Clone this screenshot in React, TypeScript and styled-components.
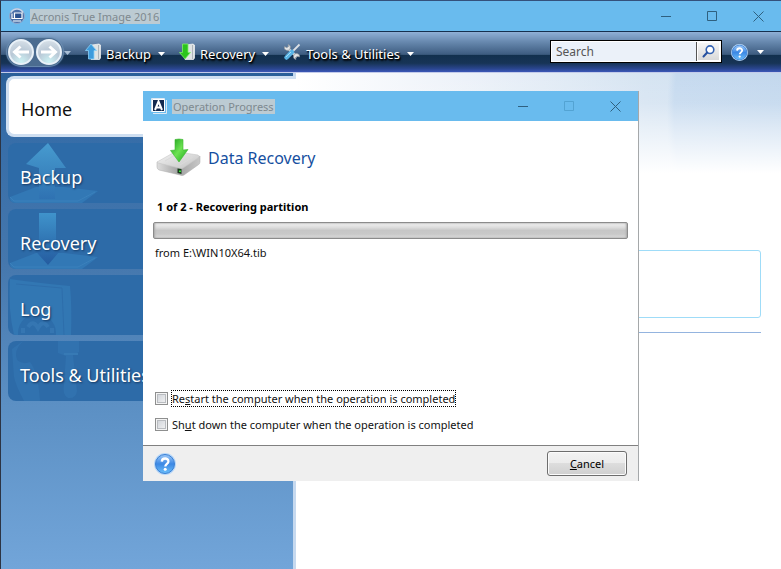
import React, { useState } from "react";
import styled, { createGlobalStyle, css } from "styled-components";

const Global = createGlobalStyle`
  *, *::before, *::after { box-sizing: border-box; }
  html, body { margin: 0; height: 100%; }
  #root { display: flex; flex-direction: column; height: 100%; }
  body, button, input { font-family: "Noto Sans", "Open Sans", sans-serif; font-size: 12px; }
  body { overflow: hidden; }
`;

const AppWindow = styled.div`
  flex: 1;
  display: flex;
  flex-direction: column;
  position: relative;
  min-height: 0;
  background: #fff;
  border-top: 1px solid #34517c;
  border-left: 1px solid #2c3444;
`;

const TitleBar = styled.header`
  display: flex;
  align-items: center;
  height: 30px;
  flex: none;
  padding-left: 8px;
  background: #69bbee;
`;

const TitleText = styled.h1`
  margin: 0 auto 0 5px;
  padding: 0 1px;
  height: 15px;
  line-height: 15px;
  font-size: 11px;
  font-weight: 400;
  white-space: nowrap;
  color: #7e898f;
  background: #bccbd3;
`;

const CaptionButton = styled.button`
  display: grid;
  place-items: center;
  width: 46px;
  height: 30px;
  padding: 0;
  border: 0;
  background: none;
  color: #2f607f;
  &:disabled { color: #53a3d3; }
`;

const Toolbar = styled.nav`
  display: flex;
  align-items: center;
  flex: none;
  height: 42px;
  padding: 0 17px 0 6px;
  border-top: 1px solid #16304f;
  border-bottom: 1px solid #c3cbea;
  background: linear-gradient(#8fb0d6 0, #6788ae 25%, #3d5c80 56%, #12304e 58%, #173456 78%, #2a4690 92%, #3c58b8 100%);
`;

const NavPair = styled.div`
  display: flex;
  align-items: center;
  gap: 2px;
  height: 28px;
  padding: 0 1px;
  border-radius: 14px;
  background: #4b6c90;
  box-shadow: 0 0 1px 1px #6d8fb3;
`;

const RoundButton = styled.button`
  display: grid;
  place-items: center;
  width: 26px;
  height: 26px;
  padding: 0;
  border: 2px solid #e9f1f8;
  border-radius: 50%;
  background: radial-gradient(circle at 50% 95%, #cdf3f5 0, #b9c8d6 50%, #dde5ec 100%);
`;

const PlainButton = styled.button`
  display: flex;
  align-items: center;
  padding: 0;
  border: 0;
  background: none;
  color: #fff;
`;

const HistoryButton = styled(PlainButton)`
  padding: 2px 0 0 1px;
  color: #a9bfd6;
`;

const HelpButton = styled(PlainButton)`
  gap: 9px;
`;

const MenuButton = styled(PlainButton)`
  gap: 5px;
  margin-left: 14px;
  font-size: 13px;
  line-height: 20px;
  white-space: nowrap;
  text-shadow: 1px 1px 1px #000, 1px 2px 2px #000;
`;

const MenuLabel = styled.span`
  display: flex;
  align-items: center;
  gap: 7px;
  padding-top: 4px;
`;

const SearchBox = styled.form`
  display: flex;
  width: 172px;
  height: 23px;
  margin-left: auto;
  margin-right: 9px;
  margin-bottom: 2px;
  border: 1px solid #000;
  background: #fff;
  padding: 1px;
`;

const SearchInput = styled.input`
  flex: 1;
  min-width: 0;
  padding: 0 4px;
  border: 0;
  border-right: 1px solid #555;
  outline: 0;
  background: #ebf1f9;
  color: #555;
  font-size: 12px;
  &::placeholder { color: #555; opacity: 1; }
`;

const SearchButton = styled.button`
  display: grid;
  place-items: center;
  width: 23px;
  padding: 0;
  border: 1px solid #fff;
  background: linear-gradient(#f6f6f6, #d9d9d9);
`;

const Body = styled.div`
  flex: 1;
  display: flex;
  min-height: 0;
`;

const Sidebar = styled.aside`
  display: flex;
  flex-direction: column;
  gap: 6px;
  width: 295px;
  flex: none;
  padding: 3px 0 0 7px;
  border-right: 3px solid #c6d9ef;
  background: linear-gradient(#2a5f99 0, #366da8 12%, #4577ad 38%, #5b8fc3 66%, #72a5d9 100%);
`;

const SideLink = styled.a<{ $active?: boolean }>`
  position: relative;
  display: flex;
  align-items: center;
  height: 60px;
  padding: 8px 0 0 12px;
  border-radius: 8px 0 0 8px;
  overflow: hidden;
  font-size: 18px;
  line-height: 24px;
  text-decoration: none;
  white-space: nowrap;
  color: #fff;
  background: #2d6ba8;
  text-shadow: 1px 1px 2px #14365f;
  ${(p) =>
    p.$active &&
    css`
      height: 61px;
      margin: 0 -3px 0 -2px;
      padding-top: 4px;
      border: 3px solid #cfdff1;
      border-right: 0;
      background: #fff;
      color: #111;
      text-shadow: none;
    `}
`;

const SideArt = styled.svg`
  position: absolute;
  left: 0;
  top: 0;
`;

const SideLabel = styled.span`
  position: relative;
`;

const Content = styled.main`
  flex: 1;
  min-width: 0;
  padding: 177px 20px 0 20px;
  background: linear-gradient(rgba(255, 255, 255, 0) 0, rgba(255, 255, 255, 0.1) 30px, rgba(255, 255, 255, 0.45) 55px, #fff 100px),
    radial-gradient(ellipse 240px 300px at 611px 40px, #bfd5ec 0, #c6daef 97%, rgba(198, 218, 239, 0) 100%),
    linear-gradient(90deg, #fff 0, #edf2f9 35%, #d6e4f2 72%, #cfe0f1 100%);
`;

const Panel = styled.section`
  height: 68px;
  border: 1px solid #9fdcf8;
  border-radius: 3px;
`;

const Rule = styled.hr`
  height: 1px;
  margin: 14px 0 0;
  border: 0;
  background: #94b4df;
`;

const Dialog = styled.section`
  position: absolute;
  left: 142px;
  top: 90px;
  width: 496px;
  display: flex;
  flex-direction: column;
  background: #fff;
  border-right: 1px solid #a5a8aa;
`;

const DialogBody = styled.div`
  display: flex;
  flex-direction: column;
  height: 324px;
  padding: 16px 10px 12px 10px;
`;

const Heading = styled.div`
  display: flex;
  align-items: center;
  gap: 6px;
  height: 42px;
  padding-left: 3px;
`;

const HeadingText = styled.h2`
  margin: 0;
  font-size: 16px;
  line-height: 24px;
  font-weight: 400;
  color: #164fa0;
`;

const Step = styled.p`
  margin: 19px 0 6px 4px;
  font-size: 11px;
  line-height: 18px;
  font-weight: 700;
  color: #000;
`;

const Progress = styled.div`
  height: 17px;
  flex: none;
  border: 1px solid #8b8b8b;
  border-radius: 2px;
  background: linear-gradient(#f2f2f2 0, #dcdcdc 30%, #c6c6c6 50%, #c9c9c9 75%, #dedede 100%);
  box-shadow: inset 1px 0 2px #aaa, inset -1px 0 2px #aaa;
`;

const Source = styled.p`
  margin: 5px 0 auto 2px;
  font-size: 11px;
  line-height: 18px;
  color: #111;
`;

const Options = styled.div`
  display: flex;
  flex-direction: column;
  align-items: flex-start;
  gap: 8px;
  padding-left: 2px;
`;

const Option = styled.label`
  display: flex;
  align-items: center;
  gap: 3px;
  height: 18px;
  font-size: 11px;
  color: #111;
  white-space: nowrap;
`;

const OptionText = styled.span<{ $focused?: boolean }>`
  line-height: 15px;
  border: 1px dotted ${(p) => (p.$focused ? "#000" : "transparent")};
`;

const Tick = styled.input`
  appearance: none;
  width: 13px;
  height: 13px;
  margin: 0;
  border: 1px solid #8e8f8f;
  background: linear-gradient(135deg, #cbcfd5, #f6f6f6);
  box-shadow: inset 0 0 0 1px #f4f4f4, inset 0 0 0 2px #b9bcc0;
  &:checked { background: #2d6ba8; }
`;

const Footer = styled.footer`
  display: flex;
  align-items: center;
  justify-content: space-between;
  height: 36px;
  padding: 0 11px;
  border-top: 1px solid #808080;
  background: #efefef;
`;

const PushButton = styled.button`
  width: 80px;
  height: 25px;
  padding: 0;
  border: 1px solid #6d6d6d;
  border-radius: 3px;
  font-size: 11px;
  color: #000;
  background: linear-gradient(#f3f3f3 0, #ebebeb 48%, #dddddd 50%, #cfcfcf 100%);
  box-shadow: inset 0 0 0 1px #fbfbfb;
`;

const Caret = () => (
  <svg width="7" height="4" viewBox="0 0 7 4" aria-hidden>
    <path d="M0 0h7L3.5 4z" fill="currentColor" />
  </svg>
);

const MinimizeIcon = () => (
  <svg width="10" height="10" viewBox="0 0 10 10" aria-hidden>
    <path d="M0 5.5h10" stroke="currentColor" />
  </svg>
);

const MaximizeIcon = () => (
  <svg width="10" height="10" viewBox="0 0 10 10" aria-hidden>
    <path d="M.5.5h9v9h-9z" stroke="currentColor" fill="none" />
  </svg>
);

const CloseIcon = () => (
  <svg width="11" height="11" viewBox="0 0 11 11" aria-hidden>
    <path d="M.5.5l10 10M10.5.5l-10 10" stroke="currentColor" />
  </svg>
);

const AppIcon = () => (
  <svg width="16" height="16" viewBox="0 0 16 16" aria-hidden>
    <circle cx="8" cy="8" r="7.5" fill="#4a6fa8" stroke="#8fa9cd" />
    <path d="M2 4.5A7 7 0 0 1 14 4.5" fill="none" stroke="#c7d6ea" strokeWidth="1.5" />
    <path d="M3 5.5v5h2M5.500 5h7.500v5.500h-7.500z" fill="#28508f" stroke="#fff" strokeWidth="1.2" />
    <path d="M4 13h8" stroke="#d6e3f2" strokeWidth="1.300" />
  </svg>
);

const ArrowIcon = ({ right }: { right?: boolean }) => (
  <svg width="18" height="14" viewBox="0 0 18 14" aria-hidden>
    <path
      d={right ? "M1 7h14M9.500 1.500L15.500 7l-6 5.500" : "M17 7H3M8.500 1.500L2.500 7l6 5.500"}
      fill="none"
      stroke="#fff"
      strokeWidth="3"
    />
  </svg>
);

const BackupIcon = () => (
  <svg width="16" height="18" viewBox="0 0 16 18" aria-hidden>
    <path d="M7 2l7-1 1.500 1v13l-1 1.500H6z" fill="#dfe3e4" stroke="#f6f7f7" strokeWidth=".7" />
    <path d="M13.500 2v14" stroke="#aeb5ba" />
    <path d="M6 1l5.500 6.500H9V16H3.500V7.500H.5z" fill="#3d9bdc" stroke="#8bd0f6" strokeWidth=".8" />
  </svg>
);

const RecoveryIcon = () => (
  <svg width="16" height="18" viewBox="0 0 16 18" aria-hidden>
    <path d="M7 2l7-1 1.500 1v13l-1 1.500H6z" fill="#dfe3e4" stroke="#f6f7f7" strokeWidth=".7" />
    <path d="M13.500 2v14" stroke="#aeb5ba" />
    <path d="M3.500 1H9v8.500h2.500L6 16 .5 9.500h3z" fill="#2cc41c" stroke="#7df068" strokeWidth=".8" />
  </svg>
);

const ToolsIcon = () => (
  <svg width="18" height="18" viewBox="0 0 18 18" aria-hidden>
    <path d="M4 4.500L14 14" stroke="#c9ced3" strokeWidth="2.500" />
    <path d="M1.500 3.500A3 3 0 1 0 5 1.500l.5 2-1.500 1.300z" fill="#e3e5e7" stroke="#8a9097" strokeWidth=".6" />
    <path d="M16.500 14A3 3 0 1 0 13 16.500l-.5-2 1.500-1.300z" fill="#e3e5e7" stroke="#8a9097" strokeWidth=".6" />
    <path d="M16.500 1.500L9 9" stroke="#dde1e5" strokeWidth="1.800" />
    <path d="M9 9l-5.500 5.500" stroke="#58b4e6" strokeWidth="4.500" strokeLinecap="round" />
    <path d="M8 9l-5 5" stroke="#a5dcf6" strokeWidth="1" />
  </svg>
);

const SearchIcon = () => (
  <svg width="13" height="13" viewBox="0 0 13 13" aria-hidden>
    <circle cx="8" cy="4.700" r="3.800" fill="#fff" stroke="#3463b3" strokeWidth="1.600" />
    <path d="M5.200 7.500L1.500 11.500" stroke="#27509f" strokeWidth="2" strokeLinecap="round" />
  </svg>
);

const HelpIcon = ({ size, id }: { size: number; id: string }) => (
  <svg width={size} height={size} viewBox="0 0 22 22" aria-hidden>
    <defs>
      <linearGradient id={id} x1="0" y1="0" x2="0" y2="1">
        <stop offset="0" stopColor="#9fcbfa" />
        <stop offset=".5" stopColor="#3c88e4" />
        <stop offset="1" stopColor="#6cc0fb" />
      </linearGradient>
    </defs>
    <circle cx="11" cy="11" r="11" fill="#b7d7f8" />
    <circle cx="11" cy="11" r="9.500" fill={`url(#${id})`} stroke="#3b80d4" strokeWidth="1" />
    <path d="M7.800 8.600c.1-4.200 6.700-4 6.600-.2 0 2.300-3.100 2.600-3.100 5" fill="none" stroke="#fff" strokeWidth="2.300" />
    <circle cx="11.200" cy="16.300" r="1.500" fill="#fff" />
  </svg>
);

const DialogIcon = () => (
  <svg width="16" height="16" viewBox="0 0 16 16" aria-hidden>
    <path d="M.5.500h13v13h-13zM15.500 2v13.500H2" fill="none" stroke="#dbe7f2" />
    <path d="M1.500 1.500h12v12h-12z" fill="#13294f" stroke="#fff" />
    <path d="M4 12L7.500 3.500l3.500 8.500M5.300 9.500h4.400" fill="none" stroke="#fff" strokeWidth="2" />
  </svg>
);

const DriveIcon = () => (
  <svg width="46" height="40" viewBox="0 0 46 40" aria-hidden>
    <defs>
      <linearGradient id="driveTop" x1="0" y1="0" x2="1" y2="1">
        <stop offset="0" stopColor="#f4f4f4" />
        <stop offset="1" stopColor="#c3c3c3" />
      </linearGradient>
      <linearGradient id="driveSide" x1="0" y1="0" x2="1" y2="0">
        <stop offset="0" stopColor="#dedede" />
        <stop offset=".5" stopColor="#a2a2a2" />
        <stop offset="1" stopColor="#c8c8c8" />
      </linearGradient>
      <linearGradient id="driveArrow" x1="0" y1="0" x2="1" y2="1">
        <stop offset="0" stopColor="#159a1a" />
        <stop offset=".5" stopColor="#6de352" />
        <stop offset="1" stopColor="#17a51a" />
      </linearGradient>
    </defs>
    <path d="M1 24l24 6 19-12v6q0 2-2 3L28 37q-2 1-4 0L3 32q-2-1-2-3z" fill="url(#driveSide)" stroke="#aaa" strokeWidth=".5" />
    <path d="M1 24L17 15q2-1 5-1l20 3q2 1 0 3L27 30q-2 1-4 0L2 25z" fill="url(#driveTop)" stroke="#c8c8c8" strokeWidth=".6" />
    <path d="M9 23l12-7M24 27l13-8" stroke="#dadada" fill="none" />
    <path d="M21.500 30.500l4 .5v5l-4-1z" fill="#173a1a" />
    <path d="M23 32.500h2v1.500h-2z" fill="#37e63b" />
    <path d="M19 1.500q4-1 8 0V12l5-.5-9 12.500-8.500-11.500L19 12z" fill="url(#driveArrow)" stroke="#39b62e" strokeWidth=".6" />
  </svg>
);

type Art = "up" | "down" | "log" | "tools";

const Artwork = ({ kind }: { kind: Art }) => (
  <SideArt width="100" height="60" viewBox="0 0 100 60" aria-hidden>
    <defs>
      <linearGradient id={`art-${kind}`} x1="0" y1="0" x2="0" y2="1">
        <stop offset="0" stopColor={kind === "down" ? "#3f93cb" : "#479bcf"} />
        <stop offset="1" stopColor={kind === "down" ? "#245b9f" : "#2f72b2"} />
      </linearGradient>
    </defs>
    {(kind === "up" || kind === "down") && (
      <>
        <path d="M2 54L28 44h28l34 4-16 12H6q-4 0-4-6z" fill="#3278b5" />
        <path d="M2 54l4 4h64l17-9" fill="none" stroke="#3b81bc" />
      </>
    )}
    {kind === "up" && <path d="M40 0L58 25H47v31H31V25L18 21z" fill="url(#art-up)" />}
    {kind === "down" && <path d="M31 4h17v32h9L40 56 22 36h9z" fill="url(#art-down)" />}
    {kind === "log" && (
      <>
        <path d="M2 4q28 4 60 7 2 20 1 49H6q-6-25-4-56z" fill="#3277b3" />
        <path d="M8 9l46 4 2 47" fill="none" stroke="#2e6eab" />
        <circle cx="29" cy="58" r="19" fill="#2d6daa" />
        <path d="M15 58v-5M44 58v-5M20 52q5-8 10 1 5-9 10-1" fill="none" stroke="#3576b2" strokeWidth="4" />
      </>
    )}
    {kind === "tools" && (
      <>
        <path d="M15 0q-10 10-6 19 6 5 13 2 8 10 10 39H16Q8 45 6 36L4 8zM50 0h21v11l-6 3 4 36q-1 8-9 7-6-3-4-14l2-28-8-3z" fill="#3172af" />
        <path d="M56 13h14" fill="none" stroke="#377ab5" strokeWidth="2" />
      </>
    )}
  </SideArt>
);

const sections: { label: string; art?: Art }[] = [
  { label: "Home" },
  { label: "Backup", art: "up" },
  { label: "Recovery", art: "down" },
  { label: "Log", art: "log" },
  { label: "Tools & Utilities", art: "tools" },
];

const menus = [
  { label: "Backup", Icon: BackupIcon },
  { label: "Recovery", Icon: RecoveryIcon },
  { label: "Tools & Utilities", Icon: ToolsIcon },
];

export default function App() {
  const [restart, setRestart] = useState(false);
  const [shutdown, setShutdown] = useState(false);

  return (
    <>
      <Global />
      <AppWindow>
        <TitleBar>
          <AppIcon />
          <TitleText>Acronis True Image 2016</TitleText>
          <CaptionButton aria-label="Minimize"><MinimizeIcon /></CaptionButton>
          <CaptionButton aria-label="Maximize"><MaximizeIcon /></CaptionButton>
          <CaptionButton aria-label="Close"><CloseIcon /></CaptionButton>
        </TitleBar>
        <Toolbar>
          <NavPair>
            <RoundButton aria-label="Back"><ArrowIcon /></RoundButton>
            <RoundButton aria-label="Forward"><ArrowIcon right /></RoundButton>
          </NavPair>
          <HistoryButton aria-label="History"><Caret /></HistoryButton>
          {menus.map(({ label, Icon }) => (
            <MenuButton key={label}>
              <Icon />
              <MenuLabel>{label}<Caret /></MenuLabel>
            </MenuButton>
          ))}
          <SearchBox onSubmit={(e) => e.preventDefault()}>
            <SearchInput aria-label="Search" placeholder="Search" />
            <SearchButton aria-label="Find"><SearchIcon /></SearchButton>
          </SearchBox>
          <HelpButton aria-label="Help">
            <HelpIcon size={17} id="help-small" />
            <Caret />
          </HelpButton>
        </Toolbar>
        <Body>
          <Sidebar>
            {sections.map((s) => (
              <SideLink key={s.label} href="#" $active={!s.art}>
                {s.art && <Artwork kind={s.art} />}
                <SideLabel>{s.label}</SideLabel>
              </SideLink>
            ))}
          </Sidebar>
          <Content>
            <Panel />
            <Rule />
          </Content>
        </Body>
        <Dialog role="dialog" aria-label="Operation Progress">
          <TitleBar>
            <DialogIcon />
            <TitleText as="h2">Operation Progress</TitleText>
            <CaptionButton aria-label="Minimize"><MinimizeIcon /></CaptionButton>
            <CaptionButton aria-label="Maximize" disabled><MaximizeIcon /></CaptionButton>
            <CaptionButton aria-label="Close"><CloseIcon /></CaptionButton>
          </TitleBar>
          <DialogBody>
            <Heading>
              <DriveIcon />
              <HeadingText>Data Recovery</HeadingText>
            </Heading>
            <Step>1 of 2 - Recovering partition</Step>
            <Progress role="progressbar" aria-valuenow={0} aria-label="Recovery progress" />
            <Source>from E:\WIN10X64.tib</Source>
            <Options>
              <Option>
                <Tick type="checkbox" checked={restart} onChange={(e) => setRestart(e.target.checked)} />
                <OptionText $focused>Re<u>s</u>tart the computer when the operation is completed</OptionText>
              </Option>
              <Option>
                <Tick type="checkbox" checked={shutdown} onChange={(e) => setShutdown(e.target.checked)} />
                <OptionText>Sh<u>u</u>t down the computer when the operation is completed</OptionText>
              </Option>
            </Options>
          </DialogBody>
          <Footer>
            <PlainButton aria-label="Help"><HelpIcon size={22} id="help-large" /></PlainButton>
            <PushButton><u>C</u>ancel</PushButton>
          </Footer>
        </Dialog>
      </AppWindow>
    </>
  );
}
